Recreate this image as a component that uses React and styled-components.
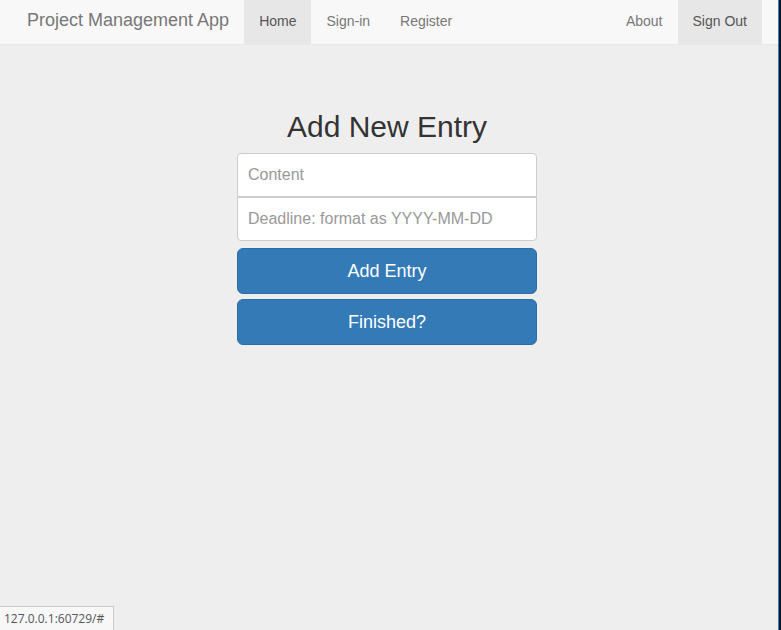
import React from 'react';
import styled, { createGlobalStyle } from 'styled-components';

const GlobalStyle = createGlobalStyle`
  html, body {
    margin: 0;
    padding: 0;
    height: 100%;
  }
  body {
    background: #eeeeee;
    font-family: "Liberation Sans", Arial, sans-serif;
    font-size: 14px;
    color: #333;
  }
  #root {
    height: 100%;
  }
`;

const Screen = styled.div`
  display: flex;
  height: 630px;
  overflow: hidden;
`;

const Page = styled.div`
  flex: 1;
  display: flex;
  flex-direction: column;
  background: #eeeeee;
`;

const WindowEdge = styled.div`
  width: 2px;
  border-left: 1px solid #2f7fd6;
  background: #121417;
`;

const Navbar = styled.nav`
  display: flex;
  align-items: stretch;
  height: 44px;
  background: #f8f8f8;
  border-bottom: 1px solid #e7e7e7;
  padding: 0 16px 0 12px;
`;

const Brand = styled.a`
  display: flex;
  align-items: center;
  padding: 0 15px 3px;
  font-size: 18px;
  color: #777;
  text-decoration: none;
`;

const NavList = styled.ul`
  display: flex;
  list-style: none;
  margin: 0;
  padding: 0;
  margin-left: ${props => (props.right ? 'auto' : '0')};
`;

const NavItem = styled.li`
  display: flex;
  align-items: center;
  padding: 0 15px 3px;
  font-size: 14px;
  color: ${props => (props.active ? '#555' : '#777')};
  background: ${props => (props.active ? '#e7e7e7' : 'transparent')};
`;

const Main = styled.main`
  display: flex;
  justify-content: center;
  padding-top: 65px;
  padding-right: 4px;
`;

const Form = styled.form`
  width: 300px;
  display: flex;
  flex-direction: column;
`;

const Heading = styled.h2`
  margin: 0 0 10px;
  font-size: 30px;
  font-weight: 500;
  line-height: 33px;
  text-align: center;
  color: #333;
`;

const Input = styled.input`
  box-sizing: border-box;
  width: 100%;
  height: 44px;
  padding: 10px 10px;
  font-family: "Liberation Sans", Arial, sans-serif;
  font-size: 16px;
  color: #555;
  background: #fff;
  border: 1px solid #ccc;
  outline: none;
  border-radius: ${props => (props.top ? '4px 4px 0 0' : '0 0 4px 4px')};
  margin-bottom: ${props => (props.top ? '0' : '7px')};
  &::placeholder {
    color: #999;
  }
`;

const Button = styled.button`
  box-sizing: border-box;
  width: 100%;
  height: 46px;
  margin-top: ${props => (props.first ? '0' : '5px')};
  font-family: "Liberation Sans", Arial, sans-serif;
  font-size: 18px;
  color: #fff;
  background: #337ab7;
  border: 1px solid #2e6da4;
  border-radius: 6px;
  cursor: pointer;
`;

const StatusBar = styled.div`
  position: fixed;
  left: 0;
  bottom: 0;
  height: 23px;
  padding: 0 9px 0 4px;
  display: flex;
  align-items: center;
  background: #f7f7f7;
  border: 1px solid #c9c9c9;
  border-left: 0;
  border-bottom: 0;
  font-family: "Open Sans", "Noto Sans", sans-serif;
  font-size: 12px;
  color: #555;
`;

export default function App() {
  return (
    <Screen>
      <GlobalStyle />
      <Page>
        <Navbar>
          <Brand href="#">Project Management App</Brand>
          <NavList>
            <NavItem active>Home</NavItem>
            <NavItem>Sign-in</NavItem>
            <NavItem>Register</NavItem>
          </NavList>
          <NavList right>
            <NavItem>About</NavItem>
            <NavItem active>Sign Out</NavItem>
          </NavList>
        </Navbar>
        <Main>
          <Form onSubmit={e => e.preventDefault()}>
            <Heading>Add New Entry</Heading>
            <Input top placeholder="Content" />
            <Input placeholder="Deadline: format as YYYY-MM-DD" />
            <Button first type="submit">Add Entry</Button>
            <Button type="button">Finished?</Button>
          </Form>
        </Main>
      </Page>
      <WindowEdge />
      <StatusBar>127.0.0.1:60729/#</StatusBar>
    </Screen>
  );
}
